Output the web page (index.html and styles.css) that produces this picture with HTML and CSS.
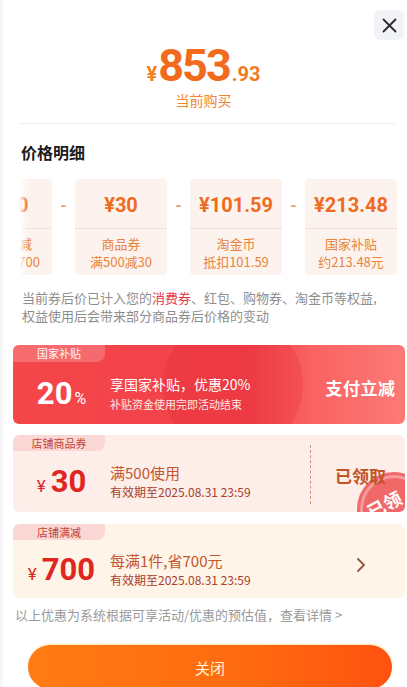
FILE: index.html
```html
<!DOCTYPE html>
<html lang="zh-CN">
<head>
  <meta charset="UTF-8">
  <title>价格明细</title>
  <link rel="stylesheet" href="styles.css">
</head>
<body>
  <div class="sheet">
    <button class="close-btn" aria-label="关闭">
      <svg width="15" height="15" viewBox="0 0 15 15"><path d="M1.5 1.5 L13.5 13.5 M13.5 1.5 L1.5 13.5" stroke="#2b2b2b" stroke-width="1.8" stroke-linecap="round"/></svg>
    </button>

    <div class="head">
      <div class="price"><span class="yen">¥</span><span class="int">853</span><span class="dec">.93</span></div>
      <div class="price-sub">当前购买</div>
    </div>

    <div class="divider"></div>

    <h2 class="title">价格明细</h2>

    <div class="detail-scroll">
      <div class="detail-track">
        <div class="d-card">
          <div class="d-amt">¥700</div>
          <div class="d-info">店铺满减<br>满1件减700</div>
        </div>
        <div class="d-sep">-</div>
        <div class="d-card">
          <div class="d-amt">¥30</div>
          <div class="d-info">商品券<br>满500减30</div>
        </div>
        <div class="d-sep">-</div>
        <div class="d-card">
          <div class="d-amt">¥101.59</div>
          <div class="d-info">淘金币<br>抵扣101.59</div>
        </div>
        <div class="d-sep">-</div>
        <div class="d-card">
          <div class="d-amt">¥213.48</div>
          <div class="d-info">国家补贴<br>约213.48元</div>
        </div>
      </div>
    </div>

    <p class="note">当前券后价已计入您的<span class="hl">消费券</span>、红包、购物券、淘金币等权益,<br>权益使用后会带来部分商品券后价格的变动</p>

    <div class="promo promo-red">
      <div class="deco"></div>
      <div class="tag">国家补贴</div>
      <div class="promo-row">
        <div class="p-left"><span class="big">20</span><span class="pct">%</span></div>
        <div class="p-mid">
          <div class="p-main">享国家补贴，优惠20%</div>
          <div class="p-sub">补贴资金使用完即活动结束</div>
        </div>
        <div class="p-right"><span class="pay">支付立减</span></div>
      </div>
    </div>

    <div class="promo promo-pink">
      <div class="tag">店铺商品券</div>
      <div class="promo-row">
        <div class="p-left"><span class="cur">¥</span><span class="big">30</span></div>
        <div class="p-mid">
          <div class="p-main">满500使用</div>
          <div class="p-sub">有效期至2025.08.31 23:59</div>
        </div>
        <div class="p-right dashed"><span class="got">已领取</span></div>
      </div>
      <div class="stamp"><span>已领</span></div>
    </div>

    <div class="promo promo-cream">
      <div class="tag">店铺满减</div>
      <div class="promo-row">
        <div class="p-left"><span class="cur">¥</span><span class="big">700</span></div>
        <div class="p-mid">
          <div class="p-main">每满1件,省700元</div>
          <div class="p-sub">有效期至2025.08.31 23:59</div>
        </div>
        <div class="p-right">
          <svg width="10" height="16" viewBox="0 0 10 16"><path d="M2 2 L8 8 L2 14" fill="none" stroke="#8a5a40" stroke-width="1.8" stroke-linecap="round" stroke-linejoin="round"/></svg>
        </div>
      </div>
    </div>

    <p class="foot">以上优惠为系统根据可享活动/优惠的预估值，查看详情 &gt;</p>

    <button class="main-btn">关闭</button>
  </div>
</body>
</html>
```

FILE: styles.css
```css
body {
  margin: 0;
  background: #fff;
  font-family: "Noto Sans CJK SC", "Noto Sans", sans-serif;
  overflow: hidden;
}

.sheet {
  position: relative;
  width: 407px;
  height: 687px;
  overflow: hidden;
  box-shadow: inset 4px 0 4px -3px rgba(0, 0, 0, 0.08);
}

.close-btn {
  position: absolute;
  top: 10px;
  right: 3px;
  width: 30px;
  height: 30px;
  border: none;
  border-radius: 6px;
  background: #f2f3f6;
  display: flex;
  align-items: center;
  justify-content: center;
  padding: 0;
}

.head {
  padding-top: 42px;
  text-align: center;
}

.price {
  height: 48px;
  line-height: 48px;
  color: #f26a1b;
  font-family: Roboto, "Noto Sans", sans-serif;
  font-weight: 700;
}

.price .yen {
  font-size: 20px;
  margin-right: 1px;
  color: #f5821f;
}

.price .int {
  font-size: 45px;
  letter-spacing: -2px;
}

.price .dec {
  font-size: 20px;
  color: #f47a20;
  margin-left: 2px;
}

.price-sub {
  font-size: 14px;
  line-height: 20px;
  color: #ef8430;
}

.divider {
  margin: 13px 12px 0 20px;
  border-top: 1px solid #eeeeee;
}

.title {
  margin: 16px 0 0 21px;
  font-size: 16px;
  line-height: 24px;
  font-weight: 700;
  color: #1c1c1c;
}

.detail-scroll {
  position: relative;
  margin: 15px 0 0 20px;
  overflow: hidden;
}

.detail-scroll::before {
  content: "";
  position: absolute;
  left: 0;
  top: 0;
  bottom: 0;
  width: 8px;
  background: linear-gradient(90deg, rgba(255, 255, 255, 0.9), rgba(255, 255, 255, 0));
  z-index: 1;
}

.detail-track {
  display: flex;
  margin-left: -60px;
}

.d-card {
  flex: 0 0 92px;
  height: 96px;
  background: #fdf3ee;
  border-radius: 4px;
  text-align: center;
}

.d-amt {
  height: 49px;
  line-height: 52px;
  border-bottom: 1px solid #f6e0d3;
  font-family: Roboto, "Noto Sans", sans-serif;
  font-size: 20px;
  font-weight: 700;
  color: #ee6c22;
}

.d-info {
  padding-top: 6px;
  font-size: 13px;
  line-height: 18px;
  color: #e8843c;
  white-space: nowrap;
}

.d-sep {
  flex: 0 0 23px;
  text-align: center;
  line-height: 50px;
  font-size: 16px;
  font-weight: 700;
  color: #ea9a6c;
}

.note {
  margin: 14px 10px 0 22px;
  font-size: 13px;
  line-height: 18px;
  color: #8e8e8e;
  white-space: nowrap;
}

.note .hl {
  color: #e8354c;
}

.promo {
  position: relative;
  margin: 20px 2px 0 13px;
  border-radius: 6px;
  overflow: hidden;
}

.tag {
  position: relative;
  width: 92px;
  height: 17px;
  line-height: 17px;
  font-size: 11px;
  text-align: center;
  border-radius: 6px 0 8px 0;
}

.promo-row {
  position: relative;
  display: flex;
  align-items: center;
}

.p-left {
  flex: 0 0 97px;
  display: flex;
  align-items: baseline;
  justify-content: center;
  font-family: Roboto, "Noto Sans", sans-serif;
  font-weight: 700;
}

.p-mid {
  flex: 1;
}

.p-main {
  font-size: 15px;
  line-height: 21px;
}

.p-sub {
  font-size: 12px;
  line-height: 18px;
}

.p-right {
  flex: 0 0 89px;
  padding-left: 6px;
  display: flex;
  align-items: center;
  justify-content: center;
  align-self: stretch;
}

/* national subsidy card */
.promo-red {
  height: 79px;
  background: linear-gradient(90deg, #f4474a 0%, #f1404a 60%, #f96262 76%, #fd7a77 100%);
  color: #fff;
}

.promo-red .deco {
  position: absolute;
  left: 150px;
  top: -30px;
  width: 140px;
  height: 140px;
  border-radius: 50%;
  background: rgba(220, 30, 40, 0.18);
}

.promo-red .tag {
  background: rgba(255, 255, 255, 0.2);
  color: #fff5f3;
}

.promo-red .promo-row {
  height: 62px;
}

.promo-red .big {
  font-size: 31px;
}

.promo-red .pct {
  font-size: 16px;
  font-weight: 400;
  margin-left: 2px;
}

.promo-red .p-main {
  font-size: 14px;
}

.promo-red .p-sub {
  font-size: 11px;
  color: #ffe9e6;
}

.pay {
  font-size: 17px;
  font-weight: 700;
  letter-spacing: 0.5px;
  margin-bottom: 12px;
}

/* coupon cards */
.promo-pink {
  margin-top: 11px;
  height: 77px;
  background: #fdeee9;
}

.promo-cream {
  margin-top: 12px;
  height: 74px;
  background: #fef4e7;
}

.promo-pink .tag,
.promo-cream .tag {
  height: 16px;
  line-height: 16px;
  background: #fad7d4;
  color: #c2443c;
}

.promo-pink .promo-row {
  height: 61px;
}

.promo-cream .promo-row {
  height: 58px;
}

.promo-pink .p-left,
.promo-cream .p-left {
  color: #df2620;
}

.cur {
  font-size: 17px;
  font-weight: 400;
  margin-right: 5px;
}

.promo-pink .big {
  font-size: 31px;
}

.promo-cream .big {
  font-size: 31px;
}

.promo-pink .p-main,
.promo-cream .p-main {
  color: #c4562f;
}

.promo-pink .p-sub,
.promo-cream .p-sub {
  color: #a8402c;
}

.dashed {
  position: relative;
}

.dashed::before {
  content: "";
  position: absolute;
  left: 0;
  top: -6px;
  bottom: 8px;
  border-left: 1px dashed #c69282;
}

.got {
  position: relative;
  z-index: 1;
  font-size: 17px;
  font-weight: 700;
  color: #c25426;
  margin-bottom: 12px;
}

.stamp {
  position: absolute;
  right: -26px;
  bottom: -34px;
  width: 68px;
  height: 68px;
  border-radius: 50%;
  border: 3px solid rgba(240, 110, 110, 0.6);
  background: rgba(238, 80, 82, 0.85);
  box-shadow: inset 0 0 0 3px rgba(255, 255, 255, 0.35);
  display: flex;
  align-items: flex-start;
  justify-content: flex-start;
}

.stamp span {
  margin: 16px 0 0 6px;
  transform: rotate(-28deg);
  font-size: 18px;
  font-weight: 700;
  color: #fff;
  white-space: nowrap;
}

.promo-cream .p-right svg {
  margin-bottom: 8px;
}

.foot {
  margin: 8px 0 0 15px;
  font-size: 13px;
  line-height: 18px;
  color: #9a9a9a;
}

.main-btn {
  display: block;
  margin: 21px 0 0 28px;
  width: 364px;
  height: 44px;
  border: none;
  border-radius: 22px;
  background: linear-gradient(90deg, #ff7b14 0%, #ff6a10 60%, #ff520f 100%);
  box-shadow: 0 -1px 2px rgba(255, 210, 120, 0.6);
  color: #fff3d6;
  font-family: "Noto Sans CJK SC", sans-serif;
  font-size: 15px;
}
```
